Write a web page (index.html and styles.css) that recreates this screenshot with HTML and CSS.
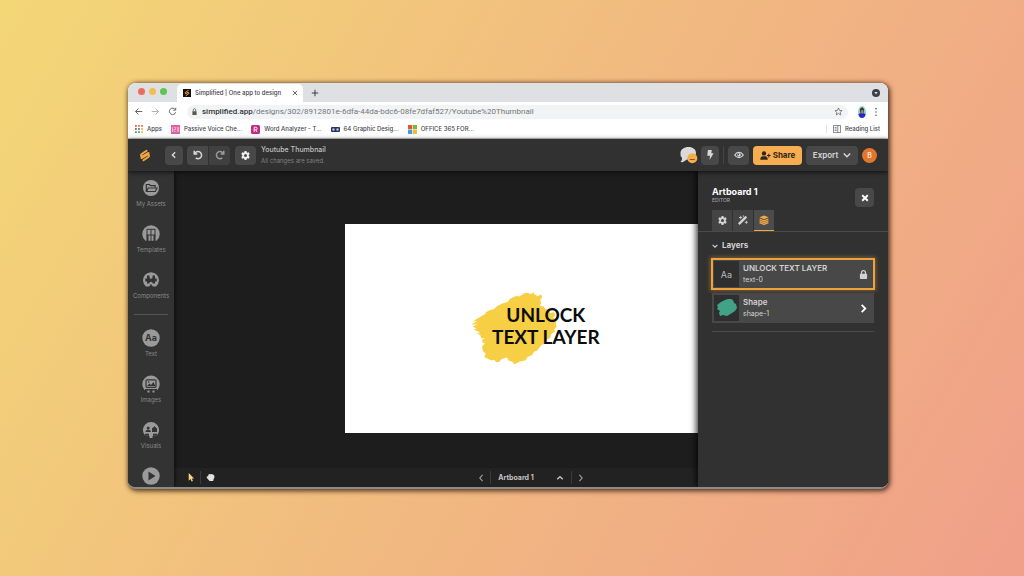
FILE: index.html
```html
<!DOCTYPE html>
<html lang="en">
<head>
<meta charset="utf-8">
<title>Simplified | One app to design</title>
<link rel="stylesheet" href="styles.css">
</head>
<body>
<div class="window">
  <div class="tabstrip">
    <span class="light red"></span><span class="light amber"></span><span class="light green"></span>
    <div class="tab">
      <svg class="favicon" viewBox="0 0 16 16"><rect width="16" height="16" fill="#111"/><path d="M10.500 3 4.500 7c-1 1.300 0 2.300 1.500 2l4-2M6 13l5.500-4c1-1.300 0-2.300-1.500-2" fill="none" stroke="#f5a83c" stroke-width="2" stroke-linecap="round"/></svg>
      <span class="tab-title">Simplified | One app to design</span>
      <button class="plain" aria-label="Close tab"><svg class="i6" viewBox="0 0 10 10"><path d="m1.500 1.500 7 7m0-7-7 7" class="line"/></svg></button>
    </div>
    <button class="plain new-tab" aria-label="New tab"><svg class="i8" viewBox="0 0 10 10"><path d="M5 1v8M1 5h8" class="line"/></svg></button>
    <svg class="i8 push" viewBox="0 0 10 10"><circle cx="5" cy="5" r="5" fill="#3c4046"/><path d="M2.900 3.700h4.200L5 6.900z" fill="#dee0e4"/></svg>
  </div>
  <div class="toolbar">
    <button class="plain" aria-label="Back"><svg class="i9" viewBox="0 0 12 12"><path d="M11 6H2m4-4L2 6l4 4" class="line"/></svg></button>
    <button class="plain faded" aria-label="Forward"><svg class="i9" viewBox="0 0 12 12"><path d="M1 6h9M6 2l4 4-4 4" class="line"/></svg></button>
    <button class="plain" aria-label="Reload"><svg class="i9" viewBox="0 0 12 12"><path d="M9.800 3.500A4.300 4.300 0 1 0 10.300 7M10.300 1v3.200H7" class="line"/></svg></button>
    <div class="address">
      <svg class="i7" viewBox="0 0 10 10"><path d="M2 4.500h6V10H2z" fill="#55585d"/><path d="M3.300 5V2.700a1.700 1.700 0 0 1 3.400 0V5" fill="none" stroke="#55585d" stroke-width="1.100"/></svg>
      <span class="url"><b>simplified.app</b>/designs/302/8912801e-6dfa-44da-bdc6-08fe7dfaf527/Youtube%20Thumbnail</span>
      <svg class="i9 push" viewBox="0 0 12 12"><path d="m6 1.300 1.400 3.200 3.400.3-2.600 2.300.8 3.500-3-1.900-3 1.900.8-3.500L1.200 4.800l3.400-.3z" fill="none" stroke="#5f6368"/></svg>
    </div>
    <svg class="profile" viewBox="0 0 8 12"><ellipse cx="4" cy="6" rx="4" ry="6" fill="#8ed3d0"/><path d="M.3 8.500C1 7 3 7 4 7s3 0 3.700 1.500C7 11 5.500 12 4 12S1 11 .3 8.500z" fill="#2329cf"/><ellipse cx="4" cy="4.500" rx="2" ry="3" fill="#24354e"/><ellipse cx="4.200" cy="5.700" rx="1.300" ry="2" fill="#b98047"/></svg>
    <button class="plain" aria-label="Browser menu"><svg class="dots" viewBox="0 0 4 12"><circle cx="2" cy="2" r="1"/><circle cx="2" cy="6" r="1"/><circle cx="2" cy="10" r="1"/></svg></button>
  </div>
  <nav class="bookmarks" aria-label="Bookmarks">
    <a href="#"><svg class="i8" viewBox="0 0 9 9"><path d="M0 0h2v2H0zM0 3.500h2v2H0z" fill="#e8503f"/><path d="M3.500 0h2v2h-2zM7 0h2v2H7z" fill="#ec6b4c"/><path d="M3.500 3.500h2v2h-2z" fill="#4387ef"/><path d="M7 3.500h2v2H7zM7 7h2v2H7z" fill="#f4b93d"/><path d="M0 7h2v2H0zM3.500 7h2v2h-2z" fill="#45a75b"/></svg>Apps</a>
    <a href="#"><svg class="i9" viewBox="0 0 9 9"><rect width="9" height="9" fill="#dc62a4"/><path d="M1.500 2v5M3 2.500h1.500v2H3v2h1.500M6 2l2 5m0-5L6 7" fill="none" stroke="#f9d3e7" stroke-width=".7"/></svg>Passive Voice Che...</a>
    <a href="#"><svg class="i9" viewBox="0 0 9 9"><rect width="9" height="9" rx="1.500" fill="#c42b83"/><path d="M3.200 7V2.200h1.600a1.300 1.300 0 0 1 0 2.600H3.400m1.500 0L6 7" fill="none" stroke="#fff" stroke-width=".9"/></svg>Word Analyzer - T...</a>
    <a href="#"><svg class="i9" viewBox="0 0 9 9"><rect y="2" width="9" height="5" rx="1" fill="#2b3565"/><circle cx="2.500" cy="4.500" r="1.200" fill="#b9c3e6"/><circle cx="6.500" cy="4.500" r="1.200" fill="#b9c3e6"/></svg>64 Graphic Desig...</a>
    <a href="#"><svg class="i9" viewBox="0 0 9 9"><path d="M0 0h4.200v4.200H0z" fill="#e8542d"/><path d="M4.800 0H9v4.200H4.800z" fill="#7fb53a"/><path d="M0 4.800h4.200V9H0z" fill="#3fa0e8"/><path d="M4.800 4.800H9V9H4.800z" fill="#f5bb38"/></svg>OFFICE 365 FOR...</a>
    <a href="#" class="reading"><svg class="i8" viewBox="0 0 10 10"><path d="M.5.500h9v9h-9zM6 .5v9M2 3h2.500M2 5h2.500M2 7h2.500" fill="none" stroke="#63666b"/></svg>Reading List</a>
  </nav>

  <header class="appbar">
    <svg class="logo" viewBox="0 0 24 26"><path d="M15 3.500 5.500 10c-3 2.500-1 6 2.500 4.500L19 8M9 22.500 18.500 16c3-2.500 1-6-2.500-4.500L5 18" fill="none" stroke="#f0a640" stroke-width="4.200" stroke-linecap="round" stroke-linejoin="round"/></svg>
    <button class="btn back" aria-label="Back to projects"><svg class="i8" viewBox="0 0 10 10"><path d="M6.500 1.500 3 5l3.500 3.500" class="thick"/></svg></button>
    <div class="pair">
      <button class="btn wide" aria-label="Undo"><svg class="i10" viewBox="0 0 12 12"><path d="M1.500 1v3.700h3.700M2 4.500a4.300 4.300 0 1 1 1.300 5" class="thick"/></svg></button>
      <button class="btn wide dim" aria-label="Redo"><svg class="i10" viewBox="0 0 12 12"><path d="M10.500 1v3.700H6.800M10 4.500a4.300 4.300 0 1 0-1.300 5" class="thick"/></svg></button>
    </div>
    <button class="btn wide gear" aria-label="Settings"><svg class="i9"><use href="#gear"/></svg></button>
    <div class="doc"><span class="doc-name">Youtube Thumbnail</span><span class="doc-state">All changes are saved.</span></div>
    <svg class="chat" viewBox="0 0 18 17"><path d="M8.500 0C13 0 16 2.500 16 6s-3 6.500-7.500 6.500H7L3 15c-1.200.4-2 .2-2.500-.3 1.200-.7 1.700-2 1.400-4A5.400 5.400 0 0 1 .5 6C.5 2.500 4 0 8.500 0z" fill="#d9d9d9"/><circle cx="12.300" cy="11.300" r="5" fill="#f2ad4c"/><path d="M9.800 12.500h5" stroke="#86581e" stroke-width="1.200"/></svg>
    <button class="btn bolt" aria-label="Shortcuts"><svg class="i10" viewBox="0 0 10 12"><path d="M2.500 0h4.700L6.500 3.800h2.800L4.500 12l.5-5.200H1.700z" fill="currentColor"/></svg></button>
    <span class="rule"></span>
    <button class="btn wide" aria-label="Preview"><svg class="i10" viewBox="0 0 14 12"><path d="M1 6c3-5 9-5 12 0-3 5-9 5-12 0z" fill="none" stroke="currentColor" stroke-width="1.600"/><circle cx="7" cy="6" r="2.500" fill="currentColor"/><circle cx="6.200" cy="5.300" r=".9" fill="#484848"/></svg></button>
    <button class="btn share"><svg class="people" viewBox="0 0 14 12"><circle cx="5" cy="3.200" r="2.900" fill="currentColor"/><path d="M0 11.500C0 8.500 1.500 7 3.500 7h3c2 0 3.500 1.500 3.500 4.500z" fill="currentColor"/><path d="M11.500 3.500v5M9 6h5" stroke="currentColor" stroke-width="1.500"/></svg>Share</button>
    <button class="btn export">Export<svg class="i8" viewBox="0 0 10 10"><path d="m1 3.200 4 4 4-4" class="thick"/></svg></button>
    <button class="avatar" aria-label="Account">B</button>
  </header>

  <main class="workspace">
    <nav class="sidebar" aria-label="Library">
      <a href="#"><svg viewBox="0 0 18 18"><circle cx="9" cy="9" r="8" fill="#9a9a9a"/><path d="M4.300 12.500V5.500h3.200l1 1.200h4.700v1.600M4.500 12.500 6.200 9H15l-1.700 3.500z" fill="none" stroke="#333" stroke-width="1.200"/></svg>My Assets</a>
      <a href="#"><svg viewBox="0 0 18 18"><path d="M3.500 15.800A8.700 8.700 0 1 1 14.500 15.800z" fill="#9a9a9a"/><path d="M5 4.300h8M5 4v7M13 4v7M9 4.300V18M5 10h8" fill="none" stroke="#333" stroke-width="1"/><path d="M4.500 10h2v7h-2zM11.500 10h2v7h-2z" fill="#333"/></svg>Templates</a>
      <a href="#"><svg viewBox="0 0 18 18"><path d="M4 15.500a8 8 0 1 1 10 0z" fill="#9a9a9a"/><path d="M5 4.500h2.500v1.800a1.500 1.500 0 0 0 3 0V4.500H13v3h1.700v3H13v2h-2.300a1.700 1.700 0 0 0-3.400 0H5v-2H3.300v-3H5z" fill="#333"/><path d="M6.700 16.500 9 12.800l2.300 3.700z" fill="#333"/></svg>Components</a>
      <hr>
      <a href="#"><svg viewBox="0 0 18 18"><circle cx="9" cy="9" r="8.700" fill="#9a9a9a"/><text x="9" y="12.200" text-anchor="middle" class="aa">Aa</text></svg>Text</a>
      <a href="#"><svg viewBox="0 0 18 18"><path d="M2.500 15A8.700 8.700 0 1 1 15.500 15z" fill="#9a9a9a"/><rect x="4" y="4.800" width="10" height="7.500" rx="1" fill="none" stroke="#333" stroke-width="1.200"/><path d="m5 11 2.500-2.500L9 10l2.500-3 1.800 4z" fill="#333"/><circle cx="6.700" cy="7" r=".8" fill="#333"/><path d="M3 14h12v1.500H3z" fill="#333"/><path d="M5.500 15.500h2v2h-2zM10.500 15.500h2v2h-2z" fill="#9a9a9a"/></svg>Images</a>
      <a href="#"><svg viewBox="0 0 18 18"><path d="M3.500 15A8.100 8.100 0 1 1 14.500 15z" fill="#9a9a9a"/><circle cx="6.200" cy="7" r="1.500" fill="#333"/><path d="M3.500 11c0-3 5.400-3 5.400 0zM10 7.500l2.500-2.200L15 7.500V11h-5z" fill="#333"/><path d="M3 12.800h4v2H3zM11 12.800h4v2h-4z" fill="#333"/><path d="M7.500 13.500h3V17h-3z" fill="#9a9a9a"/></svg>Visuals</a>
      <a href="#" aria-label="Video"><svg viewBox="0 0 18 18"><circle cx="9" cy="9" r="8.700" fill="#9a9a9a"/><path d="M6.500 4.500v9l7-4.500z" fill="#333"/></svg></a>
    </nav>

    <section class="stage">
      <div class="artboard">
        <svg class="brush" viewBox="60 32 264 228"><path fill="#f6cf45" d="M250 33 252 42 260 45 259 49 275 43 276 52 271 60 274 68 270 78 282 80 286 88 300 92 302 100 314 98 317 108 310 114 322 122 319 134 322 142 314 150 316 158 304 166 303 176 292 182 284 194 274 200 262 216 252 220 246 230 232 236 224 247 208 250 196 257 190 258 184 250 174 248 168 238 152 242 144 251 134 252 130 245 118 246 106 240 98 236 102 226 94 218 91 204 100 194 93 192 91 182 102 178 88 178 87 170 76 162 86 160 66 152 74 148 62 142 78 134 62 136 76 124 64 126 76 118 106 100 96 102 112 92 128 88 138 78 156 70 170 66 178 56 200 46 204 50 224 38 236 38 240 42 248 38z"/><path d="m60 136 38-25M66 126l28-17" stroke="#f6cf45" stroke-width="2"/></svg>
        <p class="headline">UNLOCK<br>TEXT LAYER</p>
      </div>
      <footer class="stagebar">
        <div class="tools">
          <button class="plain" aria-label="Select"><svg class="i9" viewBox="0 0 10 10"><path d="M3 0v8.500l2-1.800 1.200 2.800 1.500-.7-1.200-2.600H9z" fill="#f7d585"/></svg></button>
          <span class="rule"></span>
          <button class="plain" aria-label="Pan"><svg class="i9" viewBox="0 0 10 10"><path d="M2.500 2 4 1l1.300.5 1.500-.4 1 .8 1.200.4.4 2.700-1 2-.4 1.900H4L1 5.500.7 4l1.800-.5z" fill="#e2e2e2"/></svg></button>
        </div>
        <div class="pager">
          <button class="plain" aria-label="Previous artboard"><svg class="i8" viewBox="0 0 10 10"><path d="M7 1 3.500 5 7 9" class="line"/></svg></button>
          <span class="rule"></span>
          <button class="plain picker">Artboard 1<svg class="i8" viewBox="0 0 10 10"><path d="m1.500 6.500 3.500-3 3.500 3" class="thick"/></svg></button>
          <span class="rule"></span>
          <button class="plain" aria-label="Next artboard"><svg class="i8" viewBox="0 0 10 10"><path d="M3 1l3.500 4L3 9" class="line"/></svg></button>
        </div>
      </footer>
    </section>

    <aside class="panel">
      <div class="panel-head">
        <div><h2>Artboard 1</h2><p>EDITOR</p></div>
        <button class="btn close" aria-label="Close panel"><svg class="i8" viewBox="0 0 10 10"><path d="m1.500 1.500 7 7m0-7-7 7" fill="none" stroke="#fff" stroke-width="2.400"/></svg></button>
      </div>
      <div class="panel-tabs">
        <button aria-label="Settings"><svg class="i9"><use href="#gear"/></svg></button>
        <button aria-label="Effects"><svg class="i10" viewBox="0 0 12 12"><path d="m1 11 9-9" stroke="currentColor" stroke-width="2.800"/><path d="M3.200 1v4M1.200 3h4M10 7v3.600M8.200 8.800h3.600M6.500.5v1.800" stroke="currentColor"/></svg></button>
        <button class="active" aria-label="Layers"><svg class="i10" viewBox="0 0 12 12"><path d="m6 .5 5.500 2.300L6 5 .5 2.800z" fill="currentColor"/><path d="M.7 4.800 6 7l5.300-2.200M.7 7 6 9.200 11.300 7M.7 9.200 6 11.300l5.300-2.100" fill="none" stroke="currentColor" stroke-width="1.500"/></svg></button>
      </div>
      <div class="layers">
        <h3><svg class="i6" viewBox="0 0 10 10"><path d="m1 3 4 4 4-4" class="thick"/></svg>Layers</h3>
        <button class="layer selected">
          <span class="thumb">Aa</span>
          <span class="info"><b>UNLOCK TEXT LAYER</b><span>text-0</span></span>
          <svg class="i9" viewBox="0 0 10 10"><rect x="1" y="4.200" width="8" height="5.800" rx=".8" fill="currentColor"/><path d="M2.800 5V3a2.200 2.200 0 0 1 4.400 0v2" fill="none" stroke="currentColor" stroke-width="1.400"/></svg>
        </button>
        <button class="layer">
          <span class="thumb"><svg viewBox="0 0 22 20"><path d="M15 1l2 1 1 3 2 1 1 4-2 3-3 2-5 3-4-1-3 1-1-3 1-2-3-2 1-2-1-2 4-3 4-2 3-1z" fill="#41a288"/></svg></span>
          <span class="info"><b>Shape</b><span>shape-1</span></span>
          <svg class="i9" viewBox="0 0 10 10"><path d="M3 1l4 4-4 4" fill="none" stroke="#fff" stroke-width="2"/></svg>
        </button>
      </div>
    </aside>
  </main>
</div>
<svg class="defs" aria-hidden="true"><symbol id="gear" viewBox="0 0 12 12"><path fill-rule="evenodd" d="M4.800 0h2.400l.4 1.700 1.100.7 1.700-.6 1.200 2.100-1.300 1.300v1.600l1.300 1.300-1.200 2.100-1.700-.6-1.100.7-.4 1.700H4.800l-.4-1.700-1.100-.7-1.700.6L.4 8.100l1.300-1.300V5.200L.4 3.900l1.200-2.100 1.700.6 1.100-.7zM6 4a2 2 0 1 0 0 4 2 2 0 0 0 0-4z" fill="currentColor"/></symbol></svg>
</body>
</html>
```
FILE: styles.css
```css
* { box-sizing: border-box; }
body {
  margin: 0;
  min-height: 100vh;
  padding: 83px 136px 87px 128px;
  display: flex;
  font-family: Inter, "Liberation Sans", sans-serif;
  background: linear-gradient(120deg, #f3d776 0%, #f1ba80 50%, #f09f89 100%);
}
button { font: inherit; color: inherit; border: 0; padding: 0; cursor: pointer; }
a { color: inherit; text-decoration: none; }
h2, h3, p { margin: 0; }
svg { display: block; flex: none; }
.defs { position: absolute; width: 0; height: 0; }
.plain { background: none; display: flex; align-items: center; }
.line { fill: none; stroke: currentColor; stroke-width: 1.3; }
.thick { fill: none; stroke: currentColor; stroke-width: 1.8; }
.push { margin-left: auto; }
.i6 { width: 6px; height: 6px; }
.i7 { width: 7px; height: 7px; }
.i8 { width: 8px; height: 8px; }
.i9 { width: 9px; height: 9px; }
.i10 { width: 10px; height: 10px; }

.window {
  flex: 1;
  min-width: 0;
  display: flex;
  flex-direction: column;
  border-radius: 8px;
  border-bottom: 2px solid #8b8b8b;
  overflow: hidden;
  background: #fff;
  box-shadow: 1px 1px 5px 1px rgba(50, 25, 10, 0.85);
}

/* Browser chrome */
.tabstrip {
  height: 19px;
  display: flex;
  align-items: flex-end;
  padding: 0 8px 0 10px;
  background: #dee0e4;
  color: #3c4046;
}
.light { width: 7px; height: 7px; margin: 0 4px 7px 0; border-radius: 50%; }
.red { background: #ed6a5e; }
.amber { background: #f4bd4f; }
.green { background: #61c554; }
.tab {
  width: 126px;
  height: 18px;
  margin-left: 6px;
  padding: 0 5px 0 6px;
  display: flex;
  align-items: center;
  gap: 4px;
  border-radius: 5px 5px 0 0;
  background: #fff;
}
.favicon { width: 8px; height: 8px; }
.tab-title {
  flex: 1;
  white-space: nowrap;
  font-size: 6px;
  line-height: 10px;
  font-weight: 500;
}
.new-tab { margin: 0 0 5px 8px; }
.tabstrip > .push { margin-bottom: 5px; }
.toolbar {
  height: 19px;
  display: flex;
  align-items: center;
  gap: 8px;
  padding: 0 10px 0 6px;
  color: #5f6368;
}
.faded { opacity: 0.5; }
.address {
  flex: 1;
  min-width: 0;
  height: 14px;
  margin-left: 2px;
  padding: 0 5px 0 4px;
  display: flex;
  align-items: center;
  gap: 4px;
  border-radius: 7px;
  background: #f1f3f4;
}
.url { font: 8px/10px Roboto, sans-serif; white-space: nowrap; color: #74777b; }
.url b { font-weight: 500; color: #303338; }
.profile { width: 8px; height: 12px; margin-left: 2px; }
.dots { width: 4px; height: 10px; fill: #5f6368; }
.bookmarks {
  height: 18px;
  padding: 0 8px 1px 7px;
  display: flex;
  align-items: center;
  gap: 9px;
  border-bottom: 1px solid #c5c5c5;
  font-size: 6px;
  line-height: 8px;
  font-weight: 500;
  color: #44474c;
}
.bookmarks a { display: flex; align-items: center; gap: 4px; white-space: nowrap; }
.bookmarks .reading { margin-left: auto; padding-left: 6px; border-left: 1px solid #e4e4e4; }

/* App header */
.appbar {
  position: relative;
  z-index: 3;
  height: 32px;
  padding: 0 11px;
  display: flex;
  align-items: center;
  background: #313131;
  color: #d8d8d8;
  box-shadow: 0 1px 5px rgba(0, 0, 0, 0.7);
}
.logo { width: 12px; height: 13px; }
.btn {
  height: 19px;
  width: 18px;
  display: flex;
  align-items: center;
  justify-content: center;
  border-radius: 4px;
  background: #484848;
}
.wide { width: 21px; }
.back { margin: 0 4px 0 14px; }
.pair { display: flex; gap: 1px; }
.pair .btn:first-child { border-radius: 4px 0 0 4px; }
.pair .btn:last-child { border-radius: 0 4px 4px 0; }
.dim { background: #404040; color: #999; }
.gear { margin: 0 5px 0 5px; color: #f0f0f0; }
.doc { display: flex; flex-direction: column; gap: 2px; white-space: nowrap; }
.doc-name { font-size: 7px; line-height: 9px; font-weight: 500; color: #c2c2c2; }
.doc-state { font-size: 6px; line-height: 9px; color: #808080; }
.chat { width: 18px; height: 17px; margin-right: 3px; margin-left: auto; }
.rule { width: 1px; height: 18px; background: #444; }
.appbar .rule { margin: 0 4px; }
.share { width: 49px; margin: 0 4px; gap: 2px; background: #f6ae50; color: #33261a; font-size: 8px; font-weight: 700; }
.people { width: 11px; height: 9px; }
.export { width: 52px; margin-right: 4px; gap: 5px; font-size: 8px; font-weight: 600; }
.avatar { width: 15px; height: 15px; border-radius: 50%; background: #e2762c; color: #fae4d2; font-size: 7px; line-height: 15px; font-weight: 600; }

/* Workspace */
.workspace {
  flex: 1;
  min-height: 0;
  display: grid;
  grid-template-columns: 46px minmax(0, 1fr) 190px;
  grid-template-rows: minmax(0, 1fr);
  background: #1d1d1d;
}
.sidebar {
  grid-area: 1 / 1;
  z-index: 2;
  height: 0;
  min-height: 100%;
  overflow: hidden;
  padding-top: 8px;
  display: flex;
  flex-direction: column;
  gap: 17px;
  background: #333;
  color: #898989;
  font-size: 6px;
  line-height: 8px;
  box-shadow: 1px 0 4px rgba(0, 0, 0, 0.6);
}
.sidebar a { display: flex; flex-direction: column; align-items: center; gap: 3px; }
.sidebar svg { width: 18px; height: 18px; }
.sidebar hr { flex: none; width: 34px; height: 1px; margin: -3px auto; border: 0; background: #555; }
.aa { font: 700 9px Inter, sans-serif; fill: #333; }
.stage {
  grid-area: 1 / 2 / 2 / 4;
  display: flex;
  flex-direction: column;
  justify-content: space-between;
}
.artboard {
  position: relative;
  width: 52%;
  aspect-ratio: 16 / 9;
  margin: 53px auto 0;
  background: #fff;
}
.brush { position: absolute; left: 34%; top: 32%; width: 23%; }
.headline {
  position: absolute;
  left: 54%;
  top: 49%;
  transform: translate(-50%, -50%);
  font-family: Lato, sans-serif;
  font-size: 19px;
  line-height: 22px;
  font-weight: 700;
  text-align: center;
  white-space: nowrap;
  color: #0c0c0c;
}
.stagebar {
  height: 19px;
  display: grid;
  grid-template-columns: 1fr auto 1fr;
  align-items: center;
  background: #222;
  color: #a8a8a8;
}
.tools { display: flex; align-items: center; gap: 5px; padding-left: 12px; }
.stagebar .rule { height: 13px; background: #3a3a3a; }
.pager { display: flex; align-items: center; gap: 5px; }
.picker { gap: 22px; padding: 0 2px; font-size: 7px; line-height: 9px; font-weight: 700; color: #c4c4c4; }

/* Editor panel */
.panel {
  grid-area: 1 / 3;
  z-index: 1;
  background: #313131;
  color: #d2d2d2;
  box-shadow: -2px 0 6px rgba(0, 0, 0, 0.75);
}
.panel-head { display: flex; justify-content: space-between; padding: 15px 14px 0 14px; }
.panel-head h2 { font-size: 9px; line-height: 11px; font-weight: 700; color: #fff; }
.panel-head p { font-size: 5px; line-height: 7px; color: #b0b0b0; }
.close { margin-top: 2px; width: 19px; }
.panel-tabs { display: flex; gap: 1px; margin-top: 3px; padding-left: 14px; border-bottom: 1px solid #4a4a4a; }
.panel-tabs button {
  width: 20px;
  height: 21px;
  display: grid;
  place-items: center;
  background: #444;
  border-bottom: 1px solid #444;
}
.panel-tabs .active { background: #4c4c4c; color: #f2a940; border-color: #f2a940; }
.layers { margin: 0 14px; padding-bottom: 8px; border-bottom: 1px solid #4a4a4a; }
.layers h3 { display: flex; align-items: center; gap: 4px; padding: 8px 0; font-size: 8px; line-height: 11px; font-weight: 700; }
.layer {
  width: 100%;
  height: 30px;
  padding: 2px 6px 2px 2px;
  display: flex;
  align-items: center;
  gap: 4px;
  background: #484848;
  text-align: left;
}
.layer + .layer { margin-top: 4px; }
.selected { outline: 2px solid #eda23e; outline-offset: -1px; box-shadow: 0 0 4px 2px rgba(237, 162, 62, 0.4); }
.thumb { width: 25px; height: 26px; display: grid; place-items: center; background: #2f2f2f; font-size: 9px; color: #bdbdbd; }
.thumb svg { width: 22px; height: 20px; }
.info { flex: 1; display: flex; flex-direction: column; font-size: 7px; line-height: 11px; white-space: nowrap; }
.info b { font-size: 8px; line-height: 11px; font-weight: 600; }
```
